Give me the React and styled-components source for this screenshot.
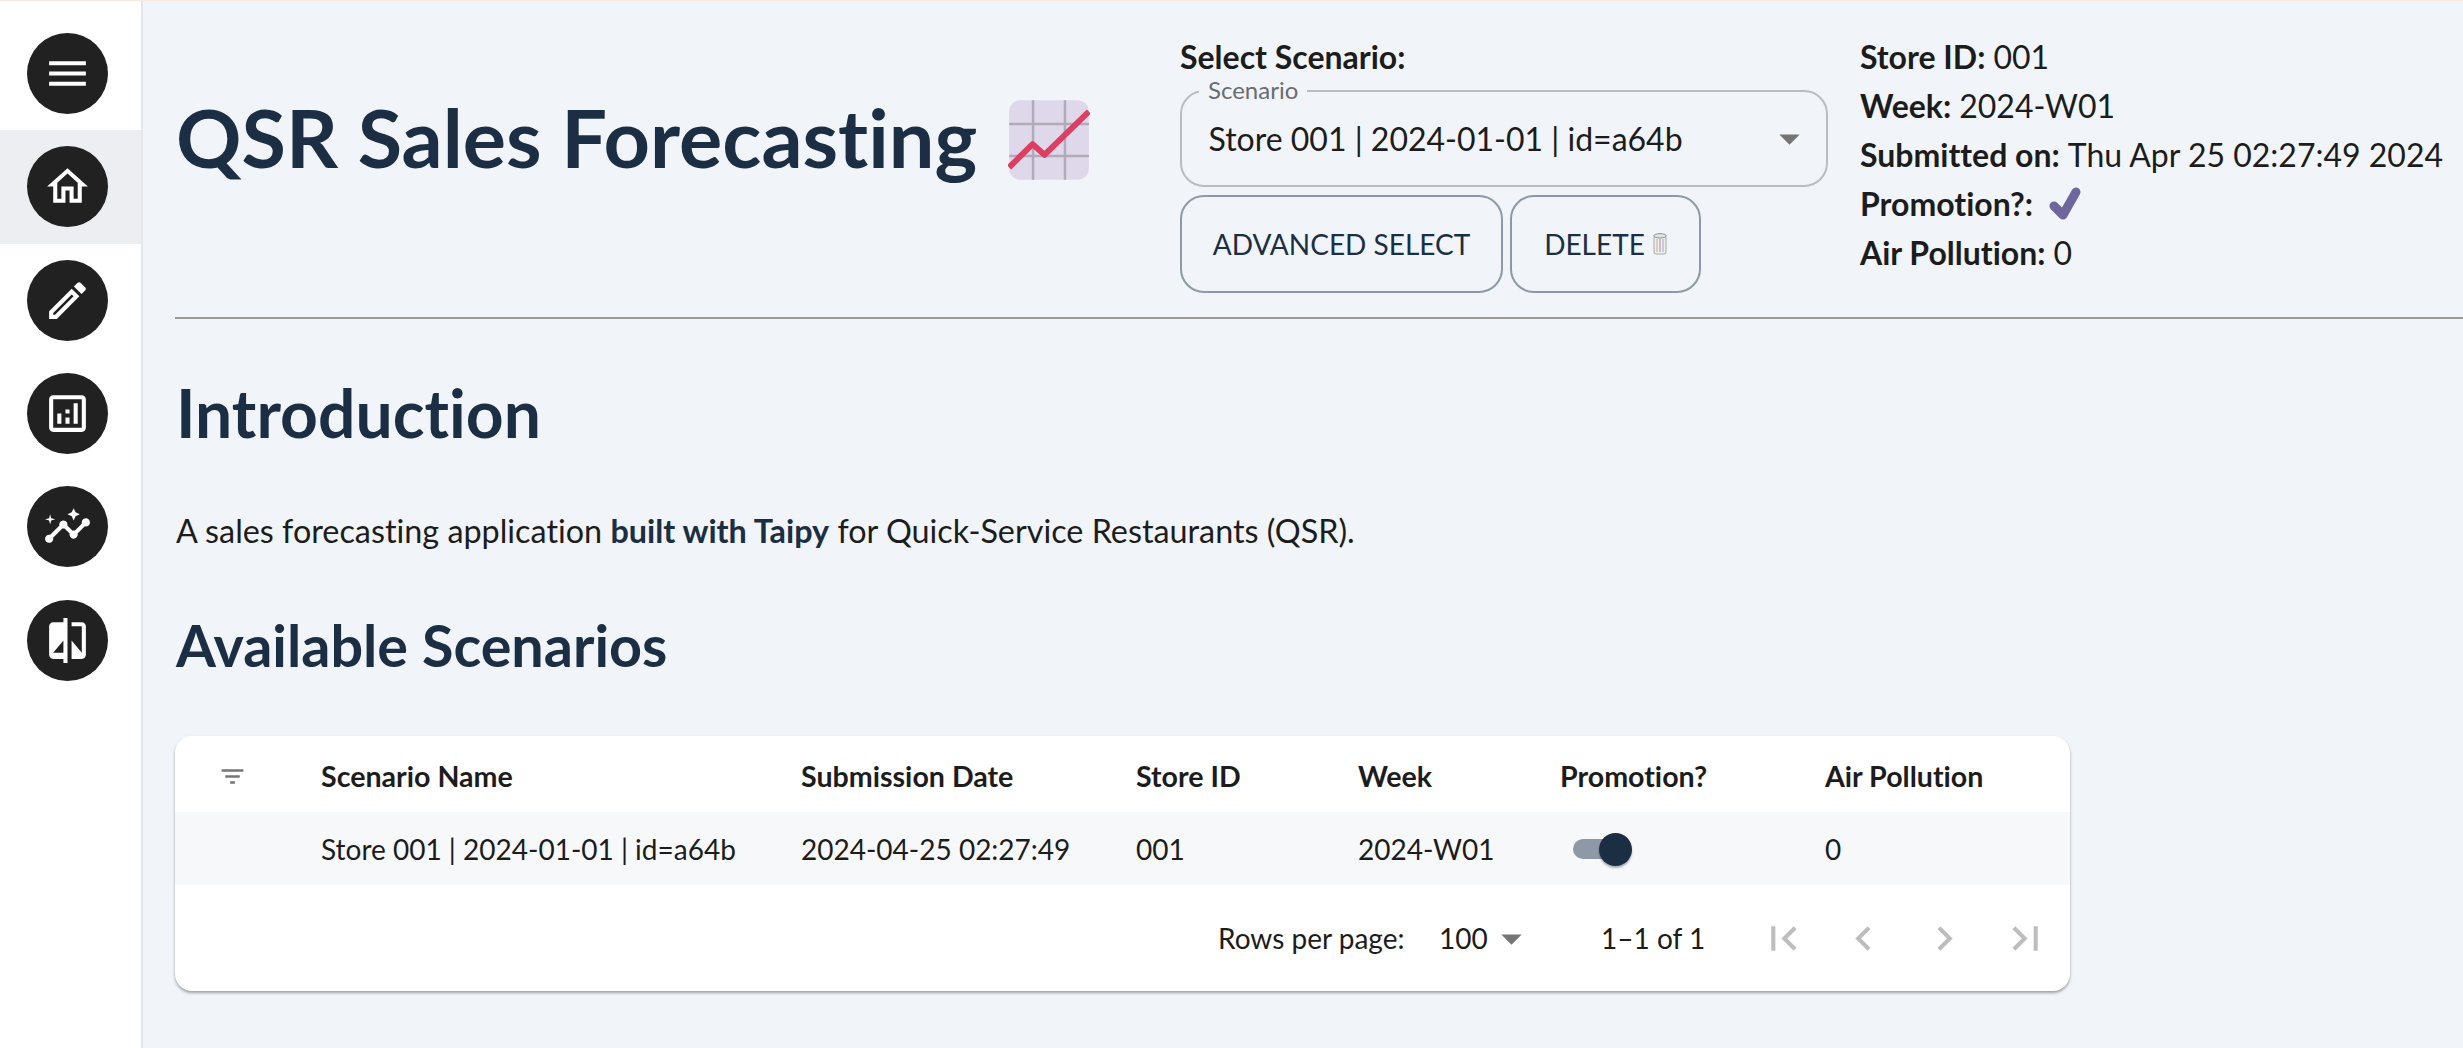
import React from 'react';
import styled, { createGlobalStyle } from 'styled-components';

const Global = createGlobalStyle`
  html, body { margin: 0; padding: 0; height: 100%; overflow: hidden; }
  body {
    background: #f1f5f9; font-family: Lato, "Liberation Sans", sans-serif; color: #1c1c1c;
    font-variant-ligatures: none;
  }
  #root { height: 100%; }
`;

const Shell = styled.div`
  display: flex; height: 1048px; border-top: 1px solid #f6e9e0; box-sizing: border-box;
`;
const Sidebar = styled.nav`
  width: 141px; flex: none; background: #fff; border-right: 2px solid #e3e6ea;
  display: flex; flex-direction: column; padding-top: 16px;
`;
const NavRow = styled.div`
  height: 113.3px; display: flex; align-items: center; padding-left: 27px;
  background: ${p => (p.$active ? '#eceef1' : 'transparent')};
`;
const NavCircle = styled.div`
  width: 81px; height: 81px; border-radius: 50%; background: #212121;
  display: flex; align-items: center; justify-content: center;
  svg { width: 49px; height: 49px; fill: #fff; display: block; }
`;
const Main = styled.main`
  flex: 1; min-width: 0; padding-left: 32px;
`;
const Header = styled.header`
  display: flex; height: 316px; border-bottom: 2px solid #999; box-sizing: content-box;
`;
const TitleCol = styled.div`
  width: 1005px; flex: none; display: flex; align-items: flex-start; padding: 91px 0 0 1px; box-sizing: border-box;
`;
const Title = styled.h1`
  margin: 0; font-size: 81px; line-height: 90px; font-weight: 700; color: #1b2e44;
  white-space: nowrap;
`;
const TitleIcon = styled.svg`
  width: 82px; height: 82px; margin-left: 31px; margin-top: 7px; flex: none;
`;
const SelectCol = styled.div`
  width: 680px; flex: none; padding-top: 31px; box-sizing: border-box;
`;
const StrongLabel = styled.div`
  font-size: 32px; line-height: 49px; font-weight: 700;
`;
const Fieldset = styled.div`
  position: relative; width: 648px; height: 97px; box-sizing: border-box; border: 2px solid #b9bcc0;
  border-radius: 24px; margin-top: 9px; display: flex; align-items: center; padding: 0 12.5px 0 26.5px;
  justify-content: space-between;
`;
const FieldLabel = styled.span`
  position: absolute; left: 17px; top: -14px; padding: 0 9px; background: #f1f5f9;
  font-size: 24px; line-height: 24px; color: #6a6d70;
`;
const SelectValue = styled.span`
  font-size: 32px; white-space: nowrap;
`;
const Caret = styled.svg`
  width: 49px; height: 49px; fill: #757575; flex: none;
`;
const ButtonRow = styled.div`
  display: flex; gap: 7px; margin-top: 8px;
`;
const OutlineButton = styled.button`
  height: 98px; box-sizing: border-box; width: ${p => p.$w}px; border: 2px solid #8d99a6; border-radius: 24px;
  background: transparent; font-family: inherit; font-size: 28px; color: #1b2e44; padding: 0;
  display: flex; align-items: center; justify-content: center; gap: 8px;
  font-variant-ligatures: none;
`;
const InfoCol = styled.div`
  padding-top: 31px;
`;
const InfoRow = styled.div`
  font-size: 32px; line-height: 49px; white-space: nowrap; display: flex; align-items: center; gap: 8px;
  b { font-weight: 700; }
`;
const Intro = styled.h2`
  margin: 54px 0 0 1px; font-size: 66px; line-height: 80px; font-weight: 700; color: #1b2e44;
`;
const SubHeading = styled.h3`
  margin: 50px 0 0 1px; font-size: 57.5px; line-height: 80px; font-weight: 700; color: #1b2e44;
`;
const Para = styled.p`
  margin: 53px 0 0 1px; font-size: 32.35px; line-height: 49px;
  b { font-weight: 700; color: #1b2e44; }
`;
const Card = styled.section`
  margin-top: 51px; width: 1895px; height: 255px; background: #fff; border-radius: 17px;
  box-shadow: 0 2px 3px rgba(0,0,0,.35); display: flex; flex-direction: column;
`;
const TableGrid = styled.div`
  display: grid; grid-template-columns: 146px 480px 335px 222px 202px 265px 1fr;
  align-items: center; height: ${p => p.$h}px; box-sizing: border-box; padding-top: ${p => p.$top || 0}px;
  background: ${p => p.$bg || 'transparent'};
  font-size: ${p => p.$size || 28}px; font-weight: ${p => p.$weight || 400};
`;
const FilterCell = styled.div`
  display: flex; justify-content: center; width: 114px;
  svg { width: 29px; height: 29px; fill: #757575; }
`;
const Cell = styled.div`
  white-space: nowrap;
`;
const Toggle = styled.div`
  position: relative; width: 55px; height: 20px; border-radius: 10px; background: #8d99a6; margin-left: 13px;
  &::after {
    content: ''; position: absolute; right: -4px; top: -6px; width: 33px; height: 33px; border-radius: 50%;
    background: #1b2e44; box-shadow: 0 2px 2px rgba(0,0,0,.3);
  }
`;
const Footer = styled.div`
  flex: 1; display: flex; align-items: center; font-size: 28px; padding-left: 1043px;
  > * { flex: none; }
`;
const FooterLabel = styled.span`
  width: 221px; white-space: nowrap;
`;
const RowsValue = styled.span`
  width: 58px;
`;
const FooterCaret = styled.svg`
  width: 49px; height: 49px; fill: #757575; margin-left: -10.5px; margin-right: 65.5px;
`;
const PageText = styled.span`
  width: 99px; white-space: nowrap; margin-right: 58.5px;
`;
const PageBtn = styled.div`
  width: 49px; height: 49px; margin-right: 31.7px;
  &:last-child { margin-right: 0; }
  svg { width: 49px; height: 49px; fill: #bdbdbd; display: block; }
`;
const CheckIcon = styled.svg`
  width: 38px; height: 38px; margin-left: 6px; flex: none;
`;

const Ico = ({ d }) => <svg viewBox="0 0 24 24"><path d={d} /></svg>;

const nav = [
  'M3 18h18v-2H3v2zm0-5h18v-2H3v2zm0-7v2h18V6H3z',
  'm12 5.69 5 4.5V18h-2v-6H9v6H7v-7.81l5-4.5M12 3 2 12h3v8h6v-6h2v6h6v-8h3L12 3z',
  'm14.06 9.02.92.92L5.92 19H5v-.92l9.06-9.06M17.66 3c-.25 0-.51.1-.7.29l-1.83 1.83 3.75 3.75 1.83-1.83c.39-.39.39-1.02 0-1.41l-2.34-2.34c-.2-.2-.45-.29-.71-.29zm-3.6 3.19L3 17.25V21h3.75L17.81 9.94l-3.75-3.75z',
  'M19 3H5c-1.1 0-2 .9-2 2v14c0 1.1.9 2 2 2h14c1.1 0 2-.9 2-2V5c0-1.1-.9-2-2-2zm0 16H5V5h14v14zM7 12h2v5H7zm8-5h2v10h-2zm-4 7h2v3h-2zm0-4h2v2h-2z',
  'M21 8c-1.45 0-2.26 1.44-1.93 2.51l-3.55 3.56c-.3-.09-.74-.09-1.04 0l-2.55-2.55C12.27 10.45 11.46 9 10 9c-1.45 0-2.27 1.44-1.93 2.52l-4.56 4.55C2.44 15.74 1 16.55 1 18c0 1.1.9 2 2 2 1.45 0 2.26-1.44 1.93-2.51l4.55-4.56c.3.09.74.09 1.04 0l2.55 2.55C12.73 16.55 13.54 18 15 18c1.45 0 2.27-1.44 1.93-2.52l3.56-3.55c1.07.33 2.51-.48 2.51-1.93 0-1.1-.9-2-2-2zM15 9l.94-2.07L18 6l-2.06-.93L15 3l-.92 2.07L12 6l2.08.93zM3.5 11 4 9l2-.5L4 8l-.5-2L3 8l-2 .5L3 9z',
  'M10 3H5c-1.1 0-2 .9-2 2v14c0 1.1.9 2 2 2h5v2h2V1h-2v2zm0 15H5l5-6v6zm9-15h-5v2h5v13l-5-6v9h5c1.1 0 2-.9 2-2V5c0-1.1-.9-2-2-2z',
];
const pages = [
  'M18.41 16.59 13.82 12l4.59-4.59L17 6l-6 6 6 6zM6 6h2v12H6z',
  'M15.41 16.59 10.83 12l4.58-4.59L14 6l-6 6 6 6 1.41-1.41z',
  'M8.59 16.59 13.17 12 8.59 7.41 10 6l6 6-6 6-1.41-1.41z',
  'M5.59 7.41 10.18 12l-4.59 4.59L7 18l6-6-6-6zM16 6h2v12h-2z',
];

const ChartEmoji = () => (
  <TitleIcon viewBox="0 0 36 36">
    <rect x="0.5" y="0.5" width="35" height="35" rx="5" fill="#ded8ea" />
    <path d="M11 .5v35M25 .5v35M.5 11h35M.5 25h35" stroke="#b1aab9" strokeWidth="1.1" fill="none" />
    <path d="M.5 30 L10.8 19.8 L16 24.5 L35.5 5.5" stroke="#dd3f63" strokeWidth="2.6" fill="none" strokeLinejoin="round" />
  </TitleIcon>
);
const Bin = () => (
  <svg width="14" height="22" viewBox="0 0 14 22">
    <rect x="1" y="2.5" width="12" height="18.5" rx="2" fill="#eef0f0" stroke="#a5aaa9" />
    <path d="M4 6v13" stroke="#d9a97a" strokeWidth="1" />
    <path d="M7 6v13" stroke="#8d97a8" strokeWidth="1" />
    <path d="M10 6v13" stroke="#c09ab8" strokeWidth="1" />
    <ellipse cx="7" cy="2.8" rx="6.2" ry="2.2" fill="#dfe3e3" stroke="#8f9593" />
  </svg>
);
const Check = () => (
  <CheckIcon viewBox="0 0 38 38">
    <path d="M7 21 L16 30 L29 7" stroke="#6f659f" strokeWidth="9" strokeLinecap="round" strokeLinejoin="round" fill="none" />
  </CheckIcon>
);

export default function App() {
  return (
    <>
      <Global />
      <Shell>
        <Sidebar>
          {nav.map((d, i) => (
            <NavRow key={i} $active={i === 1}><NavCircle><Ico d={d} /></NavCircle></NavRow>
          ))}
        </Sidebar>
        <Main>
          <Header>
            <TitleCol>
              <Title>QSR Sales Forecasting</Title>
              <ChartEmoji />
            </TitleCol>
            <SelectCol>
              <StrongLabel>Select Scenario:</StrongLabel>
              <Fieldset>
                <FieldLabel>Scenario</FieldLabel>
                <SelectValue>Store 001 | 2024-01-01 | id=a64b</SelectValue>
                <Caret viewBox="0 0 24 24"><path d="M7 10l5 5 5-5z" /></Caret>
              </Fieldset>
              <ButtonRow>
                <OutlineButton $w={323}>ADVANCED SELECT</OutlineButton>
                <OutlineButton $w={191}>DELETE <Bin /></OutlineButton>
              </ButtonRow>
            </SelectCol>
            <InfoCol>
              <InfoRow><b>Store ID:</b> 001</InfoRow>
              <InfoRow><b>Week:</b> 2024-W01</InfoRow>
              <InfoRow><b>Submitted on:</b> Thu Apr 25 02:27:49 2024</InfoRow>
              <InfoRow><b>Promotion?:</b> <Check /></InfoRow>
              <InfoRow><b>Air Pollution:</b> 0</InfoRow>
            </InfoCol>
          </Header>
          <Intro>Introduction</Intro>
          <Para>A sales forecasting application <b>built with Taipy</b> for Quick-Service Restaurants (QSR).</Para>
          <SubHeading>Available Scenarios</SubHeading>
          <Card>
            <TableGrid $h={76} $weight={700} $size={28.6} $top={4}>
              <FilterCell><Ico d="M10 18h4v-2h-4v2zM3 6v2h18V6H3zm3 7h12v-2H6v2z" /></FilterCell>
              <Cell>Scenario Name</Cell>
              <Cell>Submission Date</Cell>
              <Cell>Store ID</Cell>
              <Cell>Week</Cell>
              <Cell>Promotion?</Cell>
              <Cell>Air Pollution</Cell>
            </TableGrid>
            <TableGrid $h={73} $bg="#f7f8fa">
              <div />
              <Cell>Store 001 | 2024-01-01 | id=a64b</Cell>
              <Cell>2024-04-25 02:27:49</Cell>
              <Cell>001</Cell>
              <Cell>2024-W01</Cell>
              <Cell><Toggle /></Cell>
              <Cell>0</Cell>
            </TableGrid>
            <Footer>
              <FooterLabel>Rows per page:</FooterLabel>
              <RowsValue>100</RowsValue>
              <FooterCaret viewBox="0 0 24 24"><path d="M7 10l5 5 5-5z" /></FooterCaret>
              <PageText>1–1 of 1</PageText>
              {pages.map((d, i) => <PageBtn key={i}><Ico d={d} /></PageBtn>)}
            </Footer>
          </Card>
        </Main>
      </Shell>
    </>
  );
}
